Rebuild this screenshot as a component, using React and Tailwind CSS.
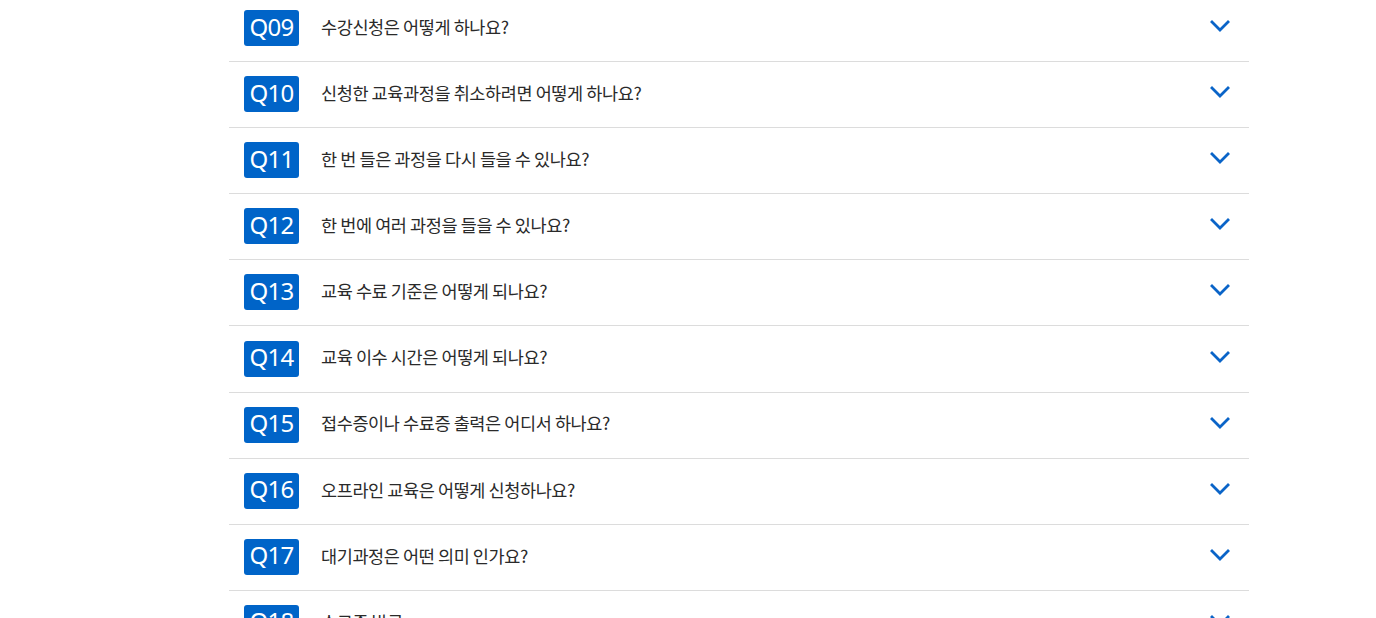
import React from "react";

const items = [
  ["Q09", "수강신청은 어떻게 하나요?"],
  ["Q10", "신청한 교육과정을 취소하려면 어떻게 하나요?"],
  ["Q11", "한 번 들은 과정을 다시 들을 수 있나요?"],
  ["Q12", "한 번에 여러 과정을 들을 수 있나요?"],
  ["Q13", "교육 수료 기준은 어떻게 되나요?"],
  ["Q14", "교육 이수 시간은 어떻게 되나요?"],
  ["Q15", "접수증이나 수료증 출력은 어디서 하나요?"],
  ["Q16", "오프라인 교육은 어떻게 신청하나요?"],
  ["Q17", "대기과정은 어떤 의미 인가요?"],
  ["Q18", "수료증 발급"],
];

function Chevron() {
  return (
    <svg width="20" height="12" viewBox="0 0 20 12" fill="none" className="mb-[5px]">
      <path d="M2 2 L10 10 L18 2" stroke="#0a64c8" strokeWidth="2.8" strokeLinecap="square" strokeLinejoin="miter" />
    </svg>
  );
}

export default function App() {
  return (
    <div className="w-[1376px] h-[618px] overflow-hidden bg-white" style={{ fontFamily: '"Noto Sans", "Noto Sans CJK KR", sans-serif' }}>
      <div className="w-[1020px] ml-[229px] -mt-[4px]">
        {items.map(([q, t]) => (
          <div key={q} className="flex items-center h-[66.1px] border-b border-[#dcdcdc] pl-[15px] pr-[19px]">
            <div className="w-[55px] h-[36px] mb-[1px] pb-[3px] rounded-[3px] bg-[#0064c8] text-white flex items-center justify-center text-[24px] leading-none tracking-[-0.8px]">
              {q}
            </div>
            <div className="ml-[22px] mb-[3px] flex-1 text-[17.5px] text-[#2a2a2a] tracking-[-0.4px]" style={{ fontFamily: '"Noto Sans CJK KR", sans-serif' }}>
              {t}
            </div>
            <Chevron />
          </div>
        ))}
      </div>
    </div>
  );
}
